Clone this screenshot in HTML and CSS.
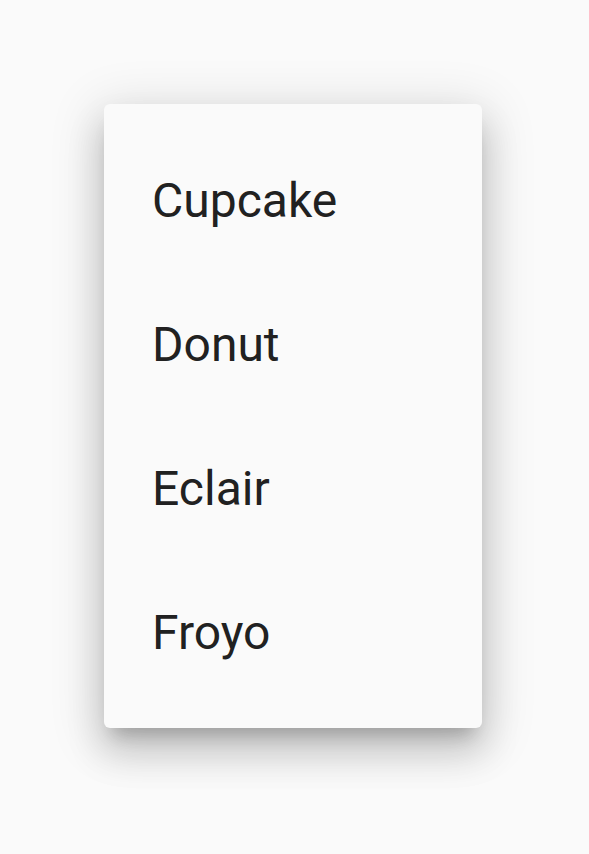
FILE: index.html
```html
<!DOCTYPE html>
<html>
<head>
<meta charset="utf-8">
<link rel="stylesheet" href="styles.css">
</head>
<body>
<div class="page">
  <ul class="menu">
    <li class="item">Cupcake</li>
    <li class="item">Donut</li>
    <li class="item">Eclair</li>
    <li class="item">Froyo</li>
  </ul>
</div>
</body>
</html>
```
FILE: styles.css
```css
html, body {
  margin: 0;
  padding: 0;
  background: #fafafa;
}
.page {
  width: 589px;
  height: 854px;
  padding: 104px 0 0 104px;
  box-sizing: border-box;
}
.menu {
  list-style: none;
  margin: 0;
  padding: 24px 0;
  width: 378px;
  background: #fafafa;
  border-radius: 6px;
  box-shadow: 0 24px 36px 3px rgba(0,0,0,0.14), 0 9px 50px 8px rgba(0,0,0,0.12), 0 15px 17px -9px rgba(0,0,0,0.2);
}
.item {
  height: 144px;
  display: flex;
  align-items: center;
  padding-left: 48px;
  font-family: Roboto, "Liberation Sans", sans-serif;
  font-size: 48px;
  color: #212121;
}
```
